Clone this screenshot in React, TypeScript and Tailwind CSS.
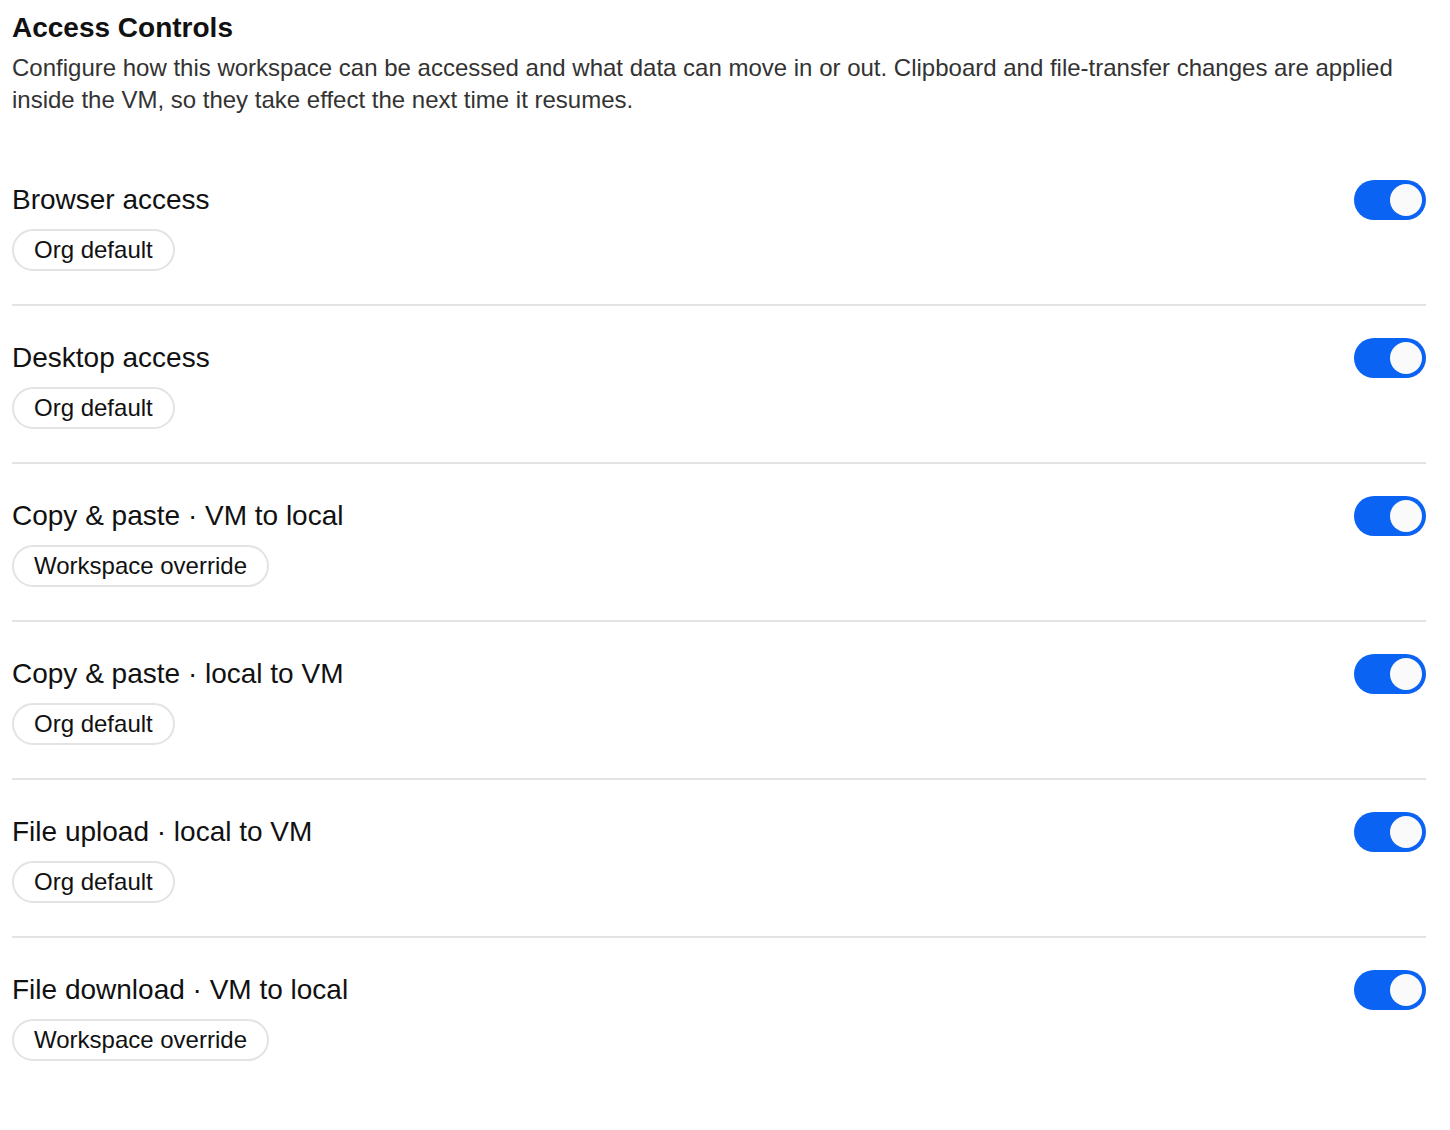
const rows = [
  { label: "Browser access", badge: "Org default" },
  { label: "Desktop access", badge: "Org default" },
  { label: "Copy & paste · VM to local", badge: "Workspace override" },
  { label: "Copy & paste · local to VM", badge: "Org default" },
  { label: "File upload · local to VM", badge: "Org default" },
  { label: "File download · VM to local", badge: "Workspace override" },
];

function Toggle() {
  return (
    <button
      type="button"
      aria-pressed="true"
      className="flex h-[40px] w-[72px] shrink-0 items-center justify-end rounded-full bg-[#0b63f3] px-[4px]"
    >
      <span className="h-[32px] w-[32px] rounded-full bg-[#fafafa]" />
    </button>
  );
}

export default function App() {
  return (
    <div className="min-h-screen bg-white px-[12px] pt-[12px] pr-[24px] font-['Liberation_Sans',Arial,sans-serif]">
      {/* Header */}
      <h1 className="text-[28px] font-bold leading-[32px] text-[#111]">
        Access Controls
      </h1>
      <p className="mt-[8px] text-[24px] leading-[32px] text-[#333]">
        Configure how this workspace can be accessed and what data can move in or out. Clipboard and
        file-transfer changes are applied inside the VM, so they take effect the next time it resumes.
      </p>

      {/* Rows */}
      <div className="mt-[32px]">
        {rows.map((row, i) => (
          <div
            key={i}
            className={
              i < rows.length - 1
                ? "border-b-2 border-[#e3e3e3] pb-[33px] pt-[32px]"
                : "pb-[33px] pt-[32px]"
            }
          >
            <div className="flex items-center justify-between">
              <span className="text-[28px] leading-[32px] text-[#111]">{row.label}</span>
              <Toggle />
            </div>
            <div className="mt-[9px]">
              <span className="inline-flex h-[42px] items-center rounded-full border-2 border-[#e3e3e3] px-[20px] text-[24px] text-[#111]">
                {row.badge}
              </span>
            </div>
          </div>
        ))}
      </div>
    </div>
  );
}
